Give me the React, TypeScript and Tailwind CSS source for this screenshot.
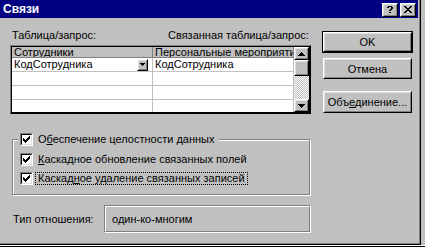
import React from "react";

function Pix({ rows, color = "#000" }: { rows: string[]; color?: string }) {
  const w = rows[0].length;
  const h = rows.length;
  return (
    <svg width={w} height={h} viewBox={`0 0 ${w} ${h}`} shapeRendering="crispEdges" className="block">
      {rows.flatMap((r, y) =>
        r.split("").map((c, x) =>
          c === "x" ? <rect key={`${x}-${y}`} x={x} y={y} width={1} height={1} fill={color} /> : null
        )
      )}
    </svg>
  );
}

const CHECK = ["......x", ".....xx", "x...xxx", "xx.xxx.", "xxxxx..", ".xxx...", "..x...."];
const CLOSE = ["xx....xx", ".xx..xx.", "..xxxx..", "...xx...", "..xxxx..", ".xx..xx.", "xx....xx"];
const HELP = [".xxxx.", "xx..xx", "....xx", "...xx.", "..xx..", "......", "..xx.."];
const UP = ["...x...", "..xxx..", ".xxxxx.", "xxxxxxx"];
const DOWN = ["xxxxxxx", ".xxxxx.", "..xxx..", "...x..."];
const SMALLDOWN = ["xxxxx", ".xxx.", "..x.."];

function Raised({ children, className = "" }: { children?: React.ReactNode; className?: string }) {
  return (
    <div className={`border border-t-white border-l-white border-r-black border-b-black bg-[#c0c0c0] ${className}`}>
      <div className="h-full w-full border border-t-[#dfdfdf] border-l-[#dfdfdf] border-r-[#808080] border-b-[#808080] flex items-center justify-center">
        {children}
      </div>
    </div>
  );
}

function CheckBox() {
  return (
    <div className="w-[13px] h-[13px] shrink-0 border border-t-[#808080] border-l-[#808080] border-r-white border-b-white">
      <div className="w-full h-full border border-t-black border-l-black border-r-[#dfdfdf] border-b-[#dfdfdf] bg-white flex items-center justify-center">
        <Pix rows={CHECK} />
      </div>
    </div>
  );
}

function CheckRow({ children, focus = false }: { children: React.ReactNode; focus?: boolean }) {
  return (
    <div className="flex items-center gap-[2px] h-[13px]">
      <CheckBox />
      <span
        className={`border px-[2px] leading-[11px] whitespace-nowrap ${
          focus ? "border-dotted border-black" : "border-transparent"
        }`}
      >
        {children}
      </span>
    </div>
  );
}

function GridRow({ a = "", b = "", active = false }: { a?: string; b?: string; active?: boolean }) {
  return (
    <div className="flex h-[14px] border-b border-[#c0c0c0] shrink-0">
      <div className="w-[141px] border-r border-[#c0c0c0] pl-[2px] pr-[4px] flex items-center justify-between">
        <span className="leading-[13px] whitespace-nowrap">{a}</span>
        {active && (
          <Raised className="w-[11px] h-[12px]">
            <Pix rows={SMALLDOWN} />
          </Raised>
        )}
      </div>
      <div className="w-[141px] border-r border-[#c0c0c0] pl-[2px] flex items-center">
        <span className="leading-[13px] whitespace-nowrap">{b}</span>
      </div>
    </div>
  );
}

export default function App() {
  return (
    <div className="w-[425px] h-[248px] overflow-hidden bg-[#c0c0c0] flex flex-col font-['Liberation_Sans',Arial,sans-serif] text-[11px] text-black">
      <div className="flex h-[245px] shrink-0">
        {/* dialog */}
        <div className="w-[421px] h-[245px] border-r border-b border-black">
          <div className="w-full h-full border-r border-b border-[#808080]">
            <div className="w-full h-full border-r border-b border-[#c0c0c0] flex flex-col">
              {/* title bar */}
              <div className="h-[18px] bg-[#000080] flex items-center pl-[3px] pr-[2px] shrink-0">
                <span className="text-white font-bold text-[12px] leading-[18px] flex-1">Связи</span>
                <div className="flex gap-[2px] mt-[1px]">
                  <Raised className="w-[16px] h-[14px]">
                    <Pix rows={HELP} />
                  </Raised>
                  <Raised className="w-[16px] h-[14px]">
                    <Pix rows={CLOSE} />
                  </Raised>
                </div>
              </div>

              {/* body */}
              <div className="flex pt-[11px] pl-[10px]">
                <div className="w-[301px] flex flex-col">
                  <div className="flex h-[13px] leading-[13px]">
                    <span className="w-[158px] pl-[2px]">Таблица/запрос:</span>
                    <span>Связанная таблица/запрос:</span>
                  </div>

                  {/* grid */}
                  <div className="mt-[3px] w-[301px] h-[69px] border border-t-[#808080] border-l-[#808080] border-r-black border-b-black">
                    <div className="w-full h-full border border-black bg-white flex overflow-hidden">
                      <div className="w-[282px] flex flex-col">
                        <div className="flex h-[11px] bg-[#c0c0c0] border-b border-[#808080] shrink-0">
                          <div className="w-[141px] border-r border-[#808080] pl-[2px] leading-[10px] whitespace-nowrap overflow-hidden">
                            Сотрудники
                          </div>
                          <div className="w-[141px] border-r border-[#808080] pl-[2px] leading-[10px] whitespace-nowrap overflow-hidden">
                            Персональные мероприятия
                          </div>
                        </div>
                        <GridRow a="КодСотрудника" b="КодСотрудника" active />
                        <GridRow />
                        <GridRow />
                        <GridRow />
                      </div>
                      <div className="w-[15px] flex flex-col">
                        <Raised className="h-[13px] shrink-0">
                          <Pix rows={UP} />
                        </Raised>
                        <Raised className="h-[16px] shrink-0" />
                        <div className="flex-1 bg-[repeating-conic-gradient(#c0c0c0_0%_25%,#ffffff_0%_50%)] bg-[length:2px_2px]" />
                        <Raised className="h-[13px] shrink-0">
                          <Pix rows={DOWN} />
                        </Raised>
                      </div>
                    </div>
                  </div>

                  {/* group */}
                  <fieldset className="mt-[19px] ml-[2px] w-[298px] min-w-0 border border-[#808080] pl-[5px] pr-0 pt-[7px] pb-[9px] shadow-[inset_1px_1px_0_#fff,1px_1px_0_#fff]">
                    <legend className="px-[2px] bg-[#c0c0c0]">
                      <CheckRow>
                        О<span className="underline underline-offset-[1px]">б</span>еспечение целостности данных
                      </CheckRow>
                    </legend>
                    <div className="flex flex-col gap-[6px] pl-[2px]">
                      <CheckRow>
                        <span className="underline underline-offset-[1px]">К</span>аскадное обновление связанных полей
                      </CheckRow>
                      <CheckRow focus>
                        Каскад<span className="underline underline-offset-[1px]">н</span>ое удаление связанных записей
                      </CheckRow>
                    </div>
                  </fieldset>

                  {/* relation type */}
                  <div className="mt-[10px] flex items-center">
                    <span className="w-[94px] pl-[3px] whitespace-nowrap">Тип отношения:</span>
                    <div className="w-[207px] h-[28px] border border-t-[#808080] border-l-[#808080] border-r-white border-b-white">
                      <div className="w-full h-full border border-t-white border-l-white border-r-[#808080] border-b-[#808080] pl-[6px] flex items-center">
                        один-ко-многим
                      </div>
                    </div>
                  </div>
                </div>

                {/* buttons */}
                <div className="ml-[11px] mt-[2px] flex flex-col">
                  <div className="w-[91px] h-[22px] border border-black">
                    <Raised className="w-full h-full">
                      <span className="leading-[12px]">OK</span>
                    </Raised>
                  </div>
                  <Raised className="mt-[5px] ml-[1px] w-[89px] h-[21px]">
                    <span className="leading-[12px]">Отмена</span>
                  </Raised>
                  <Raised className="mt-[12px] ml-[1px] w-[89px] h-[22px]">
                    <span className="leading-[12px]">
                      Объ<span className="underline underline-offset-[1px]">е</span>динение...
                    </span>
                  </Raised>
                </div>
              </div>
            </div>
          </div>
        </div>
        <div className="flex-1 bg-[#c0c0c0]" />
      </div>
      <div className="h-[3px] flex flex-col shrink-0">
        <div className="h-[1px] bg-white" />
        <div className="h-[1px] bg-black" />
        <div className="h-[1px] bg-white" />
      </div>
    </div>
  );
}
